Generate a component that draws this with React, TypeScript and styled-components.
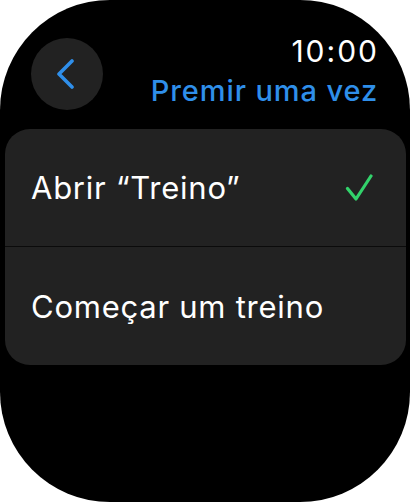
import React from "react";
import styled, { createGlobalStyle } from "styled-components";

const GlobalStyle = createGlobalStyle`
  html, body {
    margin: 0;
    padding: 0;
    background: #fff;
  }
  body {
    font-family: Inter, "Noto Sans", "Liberation Sans", sans-serif;
    -webkit-font-smoothing: antialiased;
  }
`;

const Screen = styled.div`
  width: 410px;
  height: 502px;
  background: #000;
  border-radius: 110px;
  overflow: hidden;
  display: flex;
  flex-direction: column;
`;

const Header = styled.div`
  display: flex;
  justify-content: space-between;
  align-items: flex-start;
  padding: 38px 33px 0 31px;
  height: 91px;
`;

const BackButton = styled.button`
  width: 72px;
  height: 72px;
  border-radius: 50%;
  border: none;
  background: #222;
  display: flex;
  align-items: center;
  justify-content: center;
  padding: 0;
  svg {
    display: block;
    margin-left: -1px;
  }
`;

const HeaderText = styled.div`
  display: flex;
  flex-direction: column;
  align-items: flex-end;
  margin-top: -5px;
`;

const Time = styled.div`
  color: #fff;
  font-size: 30px;
  font-weight: 400;
  line-height: 36px;
  letter-spacing: 2px;
  margin-right: -2px;
`;

const Title = styled.div`
  color: #2f8fea;
  font-size: 29px;
  font-weight: 500;
  line-height: 34px;
  letter-spacing: 0.9px;
  margin-right: -1px;
  margin-top: 5px;
`;

const Card = styled.div`
  margin: 0 4px 0 5px;
  background: #222;
  border-radius: 25px;
  overflow: hidden;
`;

const Row = styled.div`
  height: 117px;
  display: flex;
  align-items: center;
  justify-content: space-between;
  padding: 0 33px 0 26px;
  & + & {
    border-top: 1px solid #0b0b0b;
    height: 118px;
  }
`;

const RowLabel = styled.span`
  color: #fff;
  font-size: 31px;
  font-weight: 400;
  letter-spacing: 0.75px;
`;

const Check = () => (
  <svg width="28" height="28" viewBox="0 0 28 28" fill="none">
    <path
      d="M2.5 14.5 L11 25 L26 2"
      stroke="#32d26b"
      strokeWidth="3.2"
      strokeLinecap="round"
      strokeLinejoin="round"
    />
  </svg>
);

const Chevron = () => (
  <svg width="20" height="30" viewBox="0 0 20 30" fill="none">
    <path
      d="M15 2 L2 15 L15 28"
      stroke="#2f8fea"
      strokeWidth="3.6"
      strokeLinecap="round"
      strokeLinejoin="round"
    />
  </svg>
);

const options = [
  { label: "Abrir \u201cTreino\u201d", selected: true },
  { label: "Começar um treino", selected: false },
];

export default function App() {
  return (
    <>
      <GlobalStyle />
      <Screen>
        <Header>
          <BackButton aria-label="Voltar">
            <Chevron />
          </BackButton>
          <HeaderText>
            <Time>10:00</Time>
            <Title>Premir uma vez</Title>
          </HeaderText>
        </Header>
        <Card>
          {options.map((o) => (
            <Row key={o.label}>
              <RowLabel>{o.label}</RowLabel>
              {o.selected && <Check />}
            </Row>
          ))}
        </Card>
      </Screen>
    </>
  );
}
